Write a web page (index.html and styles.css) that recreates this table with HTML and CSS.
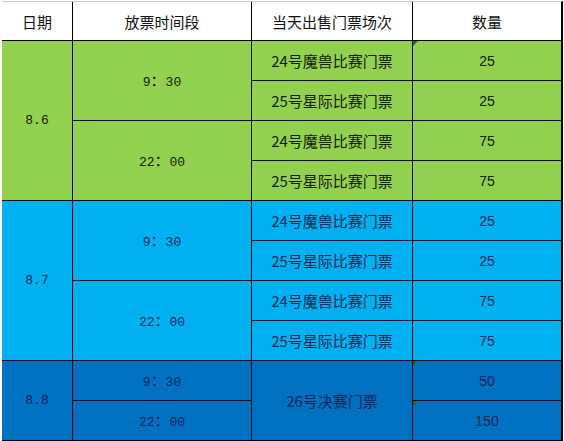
FILE: index.html
```html
<!DOCTYPE html>
<html lang="zh-CN">
<head>
<meta charset="utf-8">
<title>放票时间表</title>
<link rel="stylesheet" href="styles.css">
</head>
<body>
<div class="sheet">
  <div class="grid">
    <div class="cell head c1">日期</div>
    <div class="cell head c2">放票时间段</div>
    <div class="cell head c3">当天出售门票场次</div>
    <div class="cell head c4">数量</div>

    <div class="cell green c1 r2-5"><span class="mono">8.6</span></div>
    <div class="cell green c2 r2-3"><span class="time"><span class="mono">9</span>：<span class="mono">30</span></span></div>
    <div class="cell green c2 r4-5"><span class="time"><span class="mono">22</span>：<span class="mono">00</span></span></div>
    <div class="cell green c3">24号魔兽比赛门票</div>
    <div class="cell green c4 mark"><span class="num">25</span></div>
    <div class="cell green c3">25号星际比赛门票</div>
    <div class="cell green c4"><span class="num">25</span></div>
    <div class="cell green c3">24号魔兽比赛门票</div>
    <div class="cell green c4"><span class="num">75</span></div>
    <div class="cell green c3">25号星际比赛门票</div>
    <div class="cell green c4"><span class="num">75</span></div>

    <div class="cell sky c1 r6-9"><span class="mono">8.7</span></div>
    <div class="cell sky c2 r6-7"><span class="time"><span class="mono">9</span>：<span class="mono">30</span></span></div>
    <div class="cell sky c2 r8-9"><span class="time"><span class="mono">22</span>：<span class="mono">00</span></span></div>
    <div class="cell sky c3">24号魔兽比赛门票</div>
    <div class="cell sky c4"><span class="num">25</span></div>
    <div class="cell sky c3">25号星际比赛门票</div>
    <div class="cell sky c4"><span class="num">25</span></div>
    <div class="cell sky c3">24号魔兽比赛门票</div>
    <div class="cell sky c4"><span class="num">75</span></div>
    <div class="cell sky c3">25号星际比赛门票</div>
    <div class="cell sky c4"><span class="num">75</span></div>

    <div class="cell deep c1 r10-11"><span class="mono">8.8</span></div>
    <div class="cell deep c2"><span class="time"><span class="mono">9</span>：<span class="mono">30</span></span></div>
    <div class="cell deep c3 r10-11">26号决赛门票</div>
    <div class="cell deep c4 mark"><span class="num">50</span></div>
    <div class="cell deep c2"><span class="time"><span class="mono">22</span>：<span class="mono">00</span></span></div>
    <div class="cell deep c4 mark"><span class="num">150</span></div>
  </div>
</div>
</body>
</html>
```

FILE: styles.css
```css
html, body {
  margin: 0;
  padding: 0;
  background: #ffffff;
}

.sheet {
  width: 564px;
  height: 441px;
  overflow: hidden;
  padding-top: 1px;
  box-sizing: border-box;
}

.grid {
  margin-left: 2px;
  width: 561px;
  box-sizing: border-box;
  display: grid;
  grid-template-columns: 70px 178px 160px 148px;
  grid-template-rows: 38px repeat(10, 39px);
  gap: 1px;
  background: #000000;
  border-top: 1px solid #c9c9c9;
  border-right: 2px solid #000000;
  border-bottom: 1px solid #000000;
  font-family: "Noto Sans CJK SC", "Noto Sans", sans-serif;
  font-size: 15px;
}

.cell {
  position: relative;
  display: flex;
  align-items: center;
  justify-content: center;
  line-height: 1;
  white-space: nowrap;
}

.head {
  background: #ffffff;
  color: #111111;
  grid-row: 1;
}

.c1 { grid-column: 1; }
.c2 { grid-column: 2; }
.c3 { grid-column: 3; }
.c4 { grid-column: 4; }

.r2-5 { grid-row: 2 / 6; }
.r2-3 { grid-row: 2 / 4; }
.r4-5 { grid-row: 4 / 6; }
.r6-9 { grid-row: 6 / 10; }
.r6-7 { grid-row: 6 / 8; }
.r8-9 { grid-row: 8 / 10; }
.r10-11 { grid-row: 10 / 12; }

.green {
  background: #92d050;
  color: #15200f;
}

.sky {
  background: #00b0f0;
  color: #132a55;
}

.deep {
  background: #0070c0;
  color: #0d2758;
}

.time {
  display: inline-block;
  line-height: 1;
}

.mono {
  font-family: "Liberation Mono", "DejaVu Sans Mono", monospace;
  font-size: 13px;
}

.num {
  font-family: "Liberation Sans", "Noto Sans", sans-serif;
  font-size: 14px;
}

.mark::before {
  content: "";
  position: absolute;
  left: 0;
  top: 0;
  width: 0;
  height: 0;
  border-top: 5px solid #1e6b1e;
  border-right: 5px solid transparent;
}
```
